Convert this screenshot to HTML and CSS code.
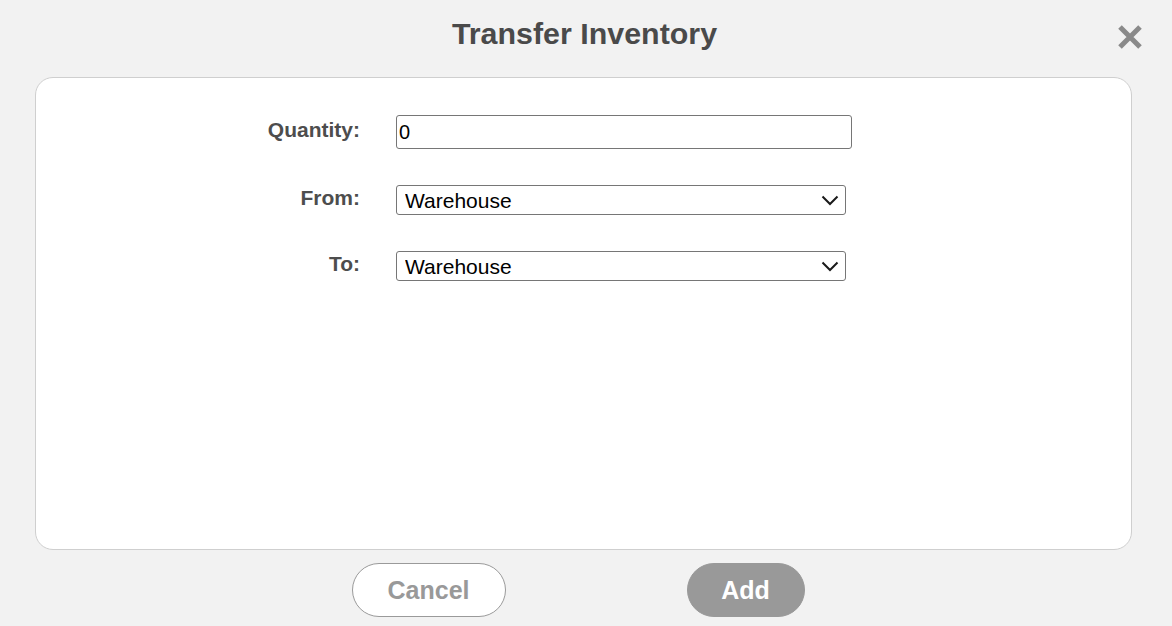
FILE: index.html
```html
<!DOCTYPE html>
<html lang="en">
<head>
<meta charset="utf-8">
<title>Transfer Inventory</title>
<link rel="stylesheet" href="styles.css">
</head>
<body>
<div class="dialog">
  <header class="dialog-header">
    <span class="spacer"></span>
    <h1 class="dialog-title">Transfer Inventory</h1>
    <button class="close-btn" type="button" aria-label="Close">
      <svg width="26" height="24" viewBox="0 0 26 24" aria-hidden="true">
        <path d="M3 2 L23 22 M23 2 L3 22" stroke="#8a8a8a" stroke-width="5" fill="none"/>
      </svg>
    </button>
  </header>
  <main class="card">
    <form class="form-grid">
      <label class="field-label" for="qty">Quantity:</label>
      <input class="text-input" id="qty" type="text" value="0">

      <label class="field-label" for="from">From:</label>
      <div class="select-wrap">
        <select class="select-input" id="from"><option>Warehouse</option></select>
        <svg class="chevron" width="18" height="11" viewBox="0 0 18 11" aria-hidden="true">
          <path d="M1.5 1.5 L9 9 L16.5 1.5" stroke="#1a1a1a" stroke-width="2" fill="none"/>
        </svg>
      </div>

      <label class="field-label" for="to">To:</label>
      <div class="select-wrap">
        <select class="select-input" id="to"><option>Warehouse</option></select>
        <svg class="chevron" width="18" height="11" viewBox="0 0 18 11" aria-hidden="true">
          <path d="M1.5 1.5 L9 9 L16.5 1.5" stroke="#1a1a1a" stroke-width="2" fill="none"/>
        </svg>
      </div>
    </form>
  </main>
  <footer class="actions">
    <button class="btn btn-cancel" type="button">Cancel</button>
    <button class="btn btn-add" type="button">Add</button>
  </footer>
</div>
</body>
</html>
```
FILE: styles.css
```css
* { box-sizing: border-box; }

html, body {
  margin: 0;
  padding: 0;
  background: #f2f2f2;
  font-family: "Liberation Sans", Arial, Helvetica, sans-serif;
}

.dialog {
  width: 1172px;
  height: 626px;
  display: flex;
  flex-direction: column;
}

.dialog-header {
  height: 77px;
  display: grid;
  grid-template-columns: 1fr auto 1fr;
  align-items: start;
  padding: 0 29px 0 26px;
}

.dialog-title {
  margin: 0;
  padding-top: 15px;
  font-size: 30.4px;
  line-height: 36px;
  font-weight: bold;
  color: #4a4a4a;
}

.close-btn {
  justify-self: end;
  margin-top: 25px;
  padding: 0;
  border: 0;
  background: transparent;
  width: 26px;
  height: 24px;
  cursor: pointer;
  line-height: 0;
}

.card {
  height: 473px;
  margin: 0 40px 0 35px;
  background: #ffffff;
  border: 1px solid #cfcfcf;
  border-radius: 18px;
  padding-top: 37px;
}

.form-grid {
  display: grid;
  grid-template-columns: 324px 456px;
  column-gap: 36px;
  row-gap: 36px;
  align-items: center;
}

.field-label {
  text-align: right;
  font-size: 21px;
  font-weight: bold;
  color: #4d4d4d;
  margin-top: -4px;
}

.text-input {
  width: 456px;
  height: 34px;
  border: 1px solid #767676;
  border-radius: 3px;
  padding: 0 2px;
  font-family: "Liberation Sans", Arial, sans-serif;
  font-size: 20px;
  color: #000;
  background: #fff;
  outline: none;
}

.select-wrap {
  position: relative;
  width: 450px;
  height: 30px;
}

.select-input {
  -webkit-appearance: none;
  appearance: none;
  width: 450px;
  height: 30px;
  border: 1px solid #767676;
  border-radius: 3px;
  background: #fff;
  padding: 0 30px 0 8px;
  font-family: "Liberation Sans", Arial, sans-serif;
  font-size: 21px;
  color: #000;
  outline: none;
}

.chevron {
  position: absolute;
  right: 7px;
  top: 10px;
  pointer-events: none;
}

.actions {
  display: flex;
  justify-content: center;
  gap: 181px;
  padding-top: 13px;
  padding-right: 16px;
}

.btn {
  height: 54px;
  border-radius: 27px;
  font-family: "Liberation Sans", Arial, sans-serif;
  font-size: 25px;
  font-weight: bold;
  cursor: pointer;
}

.btn-cancel {
  width: 154px;
  background: #ffffff;
  border: 1px solid #9a9a9a;
  color: #999999;
}

.btn-add {
  width: 118px;
  background: #999999;
  border: 1px solid #999999;
  color: #ffffff;
}
```
